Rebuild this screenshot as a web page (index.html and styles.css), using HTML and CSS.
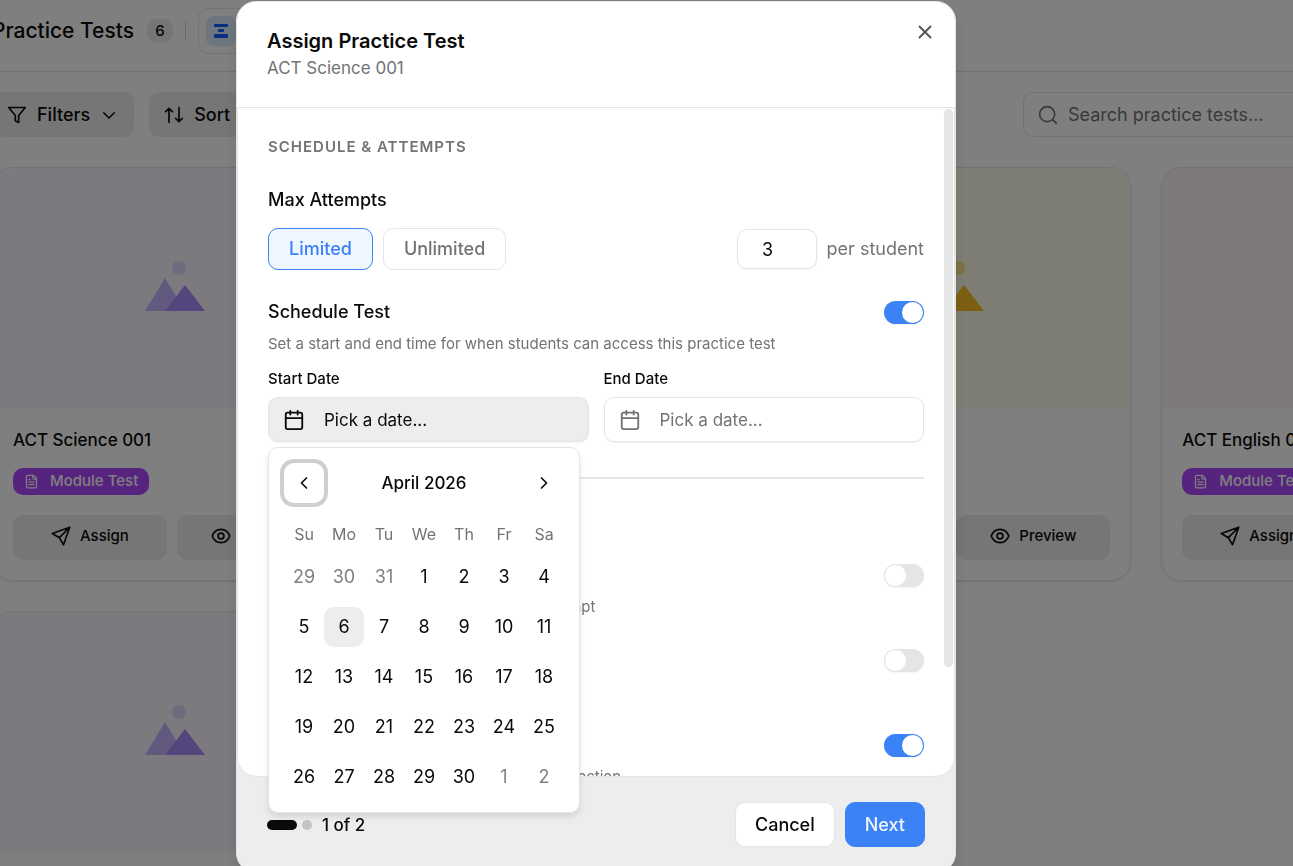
FILE: index.html
```
<!DOCTYPE html>
<html lang="en">
<head>
    <meta charset="UTF-8">
    <meta name="viewport" content="width=device-width, initial-scale=1.0">
    <title>Practice Tests</title>
    <link rel="stylesheet" href="styles.css">
</head>
<body>
    <!-- shared icons -->
    <svg class="sprite" aria-hidden="true">
        <symbol id="i-filter" viewBox="0 0 24 24"><path d="M22 3H2l8 9.500V19l4 2v-8.500z"/></symbol>
        <symbol id="i-down" viewBox="0 0 24 24"><path d="m5 9 7 7 7-7"/></symbol>
        <symbol id="i-sort" viewBox="0 0 24 24"><path d="m2 8 4-4 4 4M6 4v17M22 16l-4 4-4-4M18 20V3"/></symbol>
        <symbol id="i-search" viewBox="0 0 24 24"><circle cx="11" cy="11" r="9"/><path d="m22 22-4.600-4.600"/></symbol>
        <symbol id="i-send" viewBox="0 0 24 24"><path d="M22.500 1.500 1.500 9l8.500 5 5 8.500zM22.500 1.500 10 14"/></symbol>
        <symbol id="i-eye" viewBox="0 0 24 24"><path d="M1.500 12C3.500 6.500 7.500 4 12 4s8.500 2.500 10.500 8c-2 5.500-6 8-10.500 8S3.500 17.500 1.500 12z"/><circle cx="12" cy="12" r="3.500"/></symbol>
        <symbol id="i-file" viewBox="0 0 24 24"><path d="M15 2H6a2 2 0 0 0-2 2v16a2 2 0 0 0 2 2h12a2 2 0 0 0 2-2V7zM14 2v4a2 2 0 0 0 2 2h4M10 9H8M16 13H8M16 17H8"/></symbol>
        <symbol id="i-calendar" viewBox="0 0 24 24"><rect x="3" y="4" width="18" height="18" rx="2"/><path d="M8 2v4M16 2v4M3 10h18"/></symbol>
        <symbol id="i-left" viewBox="0 0 24 24"><path d="m15 18-6-6 6-6"/></symbol>
        <symbol id="i-right" viewBox="0 0 24 24"><path d="m9 18 6-6-6-6"/></symbol>
        <symbol id="i-close" viewBox="0 0 24 24"><path d="M18 6 6 18M6 6l12 12"/></symbol>
        <symbol id="i-hills" viewBox="0 0 80 80"><circle class="sun" cx="47" cy="20" r="7"/><path class="back" d="M13 63 33 30l20 33z"/><path class="front" d="m33 63 20-26 20 26z"/></symbol>
    </svg>

    <div class="page">
        <header class="topbar">
            <h1>Practice Tests</h1>
            <span class="count">6</span>
            <span class="separator"></span>
            <div class="views">
                <button class="view active" aria-label="Grid view">
                    <svg width="14" height="14" viewBox="0 0 14 14"><rect width="14" height="3" rx="1"/><rect x="4" y="5" width="6" height="3" rx="1"/><rect y="10" width="14" height="4" rx="1"/></svg>
                </button>
                <button class="view" aria-label="List view"></button>
            </div>
        </header>

        <div class="toolbar">
            <button class="tool"><svg class="icon"><use href="#i-filter"/></svg>Filters<svg class="icon-chevron"><use href="#i-down"/></svg></button>
            <button class="tool"><svg class="icon"><use href="#i-sort"/></svg>Sort By</button>
            <label class="search">
                <svg class="icon"><use href="#i-search"/></svg>
                <input type="search" placeholder="Search practice tests..." aria-label="Search practice tests">
            </label>
        </div>

        <main class="grid">
            <article class="card">
                <div class="thumb purple"><svg class="hills"><use href="#i-hills"/></svg></div>
                <div class="info">
                    <h2>ACT Science 001</h2>
                    <span class="tag"><svg class="icon-sm"><use href="#i-file"/></svg>Module Test</span>
                    <div class="actions">
                        <button><svg class="icon"><use href="#i-send"/></svg>Assign</button>
                        <button><svg class="icon"><use href="#i-eye"/></svg>Preview</button>
                    </div>
                </div>
            </article>
            <article class="card">
                <div class="thumb purple"><svg class="hills"><use href="#i-hills"/></svg></div>
            </article>
            <article class="card">
                <div class="thumb yellow"><svg class="hills"><use href="#i-hills"/></svg></div>
                <div class="info">
                    <h2>ACT Math</h2>
                    <span class="tag"><svg class="icon-sm"><use href="#i-file"/></svg>Module Test</span>
                    <div class="actions">
                        <button><svg class="icon"><use href="#i-send"/></svg>Assign</button>
                        <button><svg class="icon"><use href="#i-eye"/></svg>Preview</button>
                    </div>
                </div>
            </article>
            <article class="card">
                <div class="thumb pink"><svg class="hills"><use href="#i-hills"/></svg></div>
                <div class="info">
                    <h2>ACT English 001</h2>
                    <span class="tag"><svg class="icon-sm"><use href="#i-file"/></svg>Module Test</span>
                    <div class="actions">
                        <button><svg class="icon"><use href="#i-send"/></svg>Assign</button>
                        <button><svg class="icon"><use href="#i-eye"/></svg>Preview</button>
                    </div>
                </div>
            </article>
            <article class="card">
                <div class="thumb purple"><svg class="hills"><use href="#i-hills"/></svg></div>
                <div class="info"></div>
            </article>
            <article class="card">
                <div class="thumb purple"><svg class="hills"><use href="#i-hills"/></svg></div>
            </article>
        </main>
    </div>

    <div class="overlay">
        <div class="modal" role="dialog" aria-labelledby="modal-title">
            <div class="modal-header">
                <div>
                    <h2 id="modal-title">Assign Practice Test</h2>
                    <p>ACT Science 001</p>
                </div>
                <button class="close" aria-label="Close"><svg class="icon-md"><use href="#i-close"/></svg></button>
            </div>

            <div class="modal-body">
                <h3>Schedule &amp; Attempts</h3>

                <div class="label">Max Attempts</div>
                <div class="attempts">
                    <button class="choice selected">Limited</button>
                    <button class="choice">Unlimited</button>
                    <input type="number" id="attempts" value="3" min="1">
                    <label for="attempts">per student</label>
                </div>

                <div class="setting">
                    <label class="label" for="schedule">Schedule Test</label>
                    <input type="checkbox" class="switch" id="schedule" checked>
                </div>
                <p class="hint">Set a start and end time for when students can access this practice test</p>

                <div class="dates">
                    <div class="field">
                        <label for="start-date">Start Date</label>
                        <button class="date open" id="start-date"><svg class="icon-md"><use href="#i-calendar"/></svg>Pick a date...</button>
                    </div>
                    <div class="field">
                        <label for="end-date">End Date</label>
                        <button class="date" id="end-date"><svg class="icon-md"><use href="#i-calendar"/></svg>Pick a date...</button>
                    </div>
                </div>

                <hr>

                <h3>Options</h3>
                <div class="setting">
                    <label class="label" for="shuffle">Shuffle Answers</label>
                    <input type="checkbox" class="switch" id="shuffle">
                </div>
                <p class="hint">Shuffle the order of answers for every attempt</p>
                <div class="setting">
                    <label class="label" for="answers">Show Answers</label>
                    <input type="checkbox" class="switch" id="answers">
                </div>
                <p class="hint">Show answers after submission</p>
                <div class="setting">
                    <label class="label" for="timer">Section Timer</label>
                    <input type="checkbox" class="switch" id="timer" checked>
                </div>
                <p class="hint">Apply the standard time limit in every ACT section</p>
                <div class="scrollbar"></div>
            </div>

            <div class="modal-footer">
                <span class="step current"></span>
                <span class="step"></span>
                <span class="step-text">1 of 2</span>
                <button class="btn">Cancel</button>
                <button class="btn primary">Next</button>
            </div>

            <div class="calendar">
                <div class="calendar-nav">
                    <button class="focused" aria-label="Previous month"><svg class="icon"><use href="#i-left"/></svg></button>
                    <span>April 2026</span>
                    <button aria-label="Next month"><svg class="icon"><use href="#i-right"/></svg></button>
                </div>
                <table>
                    <thead>
                        <tr><th>Su</th><th>Mo</th><th>Tu</th><th>We</th><th>Th</th><th>Fr</th><th>Sa</th></tr>
                    </thead>
                    <tbody id="days"></tbody>
                </table>
            </div>
        </div>
    </div>

    <script>
        // April 2026 starts on a Wednesday, so the first cell is March 29
        var body = document.getElementById('days');
        for (var week = 0; week < 5; week++) {
            var row = body.insertRow();
            for (var day = 0; day < 7; day++) {
                var date = new Date(2026, 2, 29 + week * 7 + day);
                var button = document.createElement('button');
                button.innerText = date.getDate();
                if (date.getMonth() !== 3) {
                    button.className = 'outside';
                } else if (date.getDate() === 6) {
                    button.className = 'today';
                }
                row.insertCell().appendChild(button);
            }
        }
    </script>
</body>
</html>
```
FILE: styles.css
```
* {
    box-sizing: border-box;
}
body {
    margin: 0;
    height: 100vh;
    overflow: hidden;
    font-family: Inter, "Liberation Sans", sans-serif;
    font-size: 18px;
    line-height: 24px;
    color: #0a0a0a;
    background: white;
}
h1, h2, h3, p {
    margin: 0;
}
button, input {
    font: inherit;
    color: inherit;
}
button {
    padding: 0;
    border: none;
    background: none;
    cursor: pointer;
}
svg {
    flex: none;
}
.sprite {
    display: none;
}
.icon, .icon-sm, .icon-md, .icon-chevron {
    fill: none;
    stroke: currentColor;
    stroke-width: 2;
    stroke-linecap: round;
    stroke-linejoin: round;
}
.icon {
    width: 20px;
    height: 20px;
}
.icon-chevron {
    width: 18px;
    height: 18px;
}
.icon-sm {
    width: 15px;
    height: 15px;
}
.icon-md {
    width: 22px;
    height: 22px;
}

/* page behind the dialog */
.page {
    margin: 0 -228px 0 -8px;
}
.topbar {
    display: flex;
    align-items: center;
    height: 72px;
    padding-bottom: 9px;
    border-bottom: 1px solid #e5e5e5;
}
.topbar h1 {
    font-size: 21px;
    font-weight: 500;
}
.count {
    width: 26px;
    margin-left: 13px;
    border-radius: 10px;
    background: #ededed;
    font-size: 15px;
    font-weight: 500;
    text-align: center;
}
.separator {
    width: 1px;
    height: 20px;
    margin: 0 12px;
    background: #d4d4d4;
}
.views {
    display: flex;
    gap: 8px;
    padding: 7px;
    border: 1px solid #e5e5e5;
    border-radius: 10px;
}
.view {
    display: flex;
    align-items: center;
    justify-content: center;
    width: 30px;
    height: 30px;
    border-radius: 8px;
}
.view.active {
    background: #dbeafe;
    fill: #155dfc;
}
.toolbar {
    display: flex;
    gap: 15px;
    padding: 20px 0 30px;
}
.tool {
    display: flex;
    align-items: center;
    gap: 10px;
    height: 45px;
    padding: 0 16px 0 15px;
    border-radius: 10px;
    background: #ededed;
    font-weight: 500;
}
.search {
    display: flex;
    align-items: center;
    gap: 8px;
    width: 498px;
    height: 45px;
    margin-left: auto;
    padding: 0 14px;
    border: 1px solid #e5e5e5;
    border-radius: 10px;
    color: #737373;
}
.search input {
    flex: 1;
    border: none;
    outline: none;
    background: none;
}
.search input::placeholder {
    color: #737373;
}
.grid {
    display: grid;
    grid-template-columns: repeat(4, 1fr);
    gap: 30px;
}
.card {
    overflow: hidden;
    border: 1px solid #e5e5e5;
    border-radius: 20px;
    box-shadow: 0 1px 2px rgba(0, 0, 0, 0.1);
}
.thumb {
    display: flex;
    align-items: center;
    justify-content: center;
    height: 240px;
}
.hills {
    width: 80px;
    height: 80px;
}
.purple {
    background: #faf5ff;
    --sun: #ddd6fe;
    --back: #c4b5fd;
    --front: #a78bfa;
}
.yellow {
    background: #fefce8;
    --sun: #fde68a;
    --back: #fcd34d;
    --front: #fbbf24;
}
.pink {
    background: #fdf2f8;
    --sun: #fbcfe8;
    --back: #f9a8d4;
    --front: #f472b6;
}
.sun {
    fill: var(--sun);
}
.back {
    fill: var(--back);
}
.front {
    fill: var(--front);
}
.info {
    padding: 20px;
}
.info h2 {
    margin-bottom: 16px;
    font-size: 17px;
    font-weight: 500;
}
.tag {
    display: flex;
    align-items: center;
    gap: 11px;
    width: fit-content;
    height: 27px;
    margin-bottom: 20px;
    padding: 0 11px 1px;
    border-radius: 10px;
    background: #ad46ff;
    color: white;
    font-size: 15px;
    font-weight: 500;
}
.actions {
    display: grid;
    grid-template-columns: 1fr 1fr;
    gap: 10px;
}
.actions button {
    display: flex;
    align-items: center;
    justify-content: center;
    gap: 9px;
    height: 45px;
    padding-bottom: 3px;
    border-radius: 10px;
    background: #ededed;
    font-size: 15px;
    font-weight: 500;
}

/* dialog */
.overlay {
    position: fixed;
    inset: 0;
    display: flex;
    justify-content: center;
    padding: 1px 101px 0 0;
    background: rgba(0, 0, 0, 0.5);
}
.modal {
    position: relative;
    display: flex;
    flex-direction: column;
    width: 100%;
    max-width: 720px;
    height: calc(100vh + 6px);
    border: 1px solid #e5e5e5;
    border-radius: 20px;
    background: #ededed;
    box-shadow: 0 10px 15px rgba(0, 0, 0, 0.1);
}
.modal-header {
    display: flex;
    justify-content: space-between;
    align-items: flex-start;
    padding: 25px 19px;
    border-bottom: 1px solid #e5e5e5;
    border-radius: 20px 20px 0 0;
    background: white;
}
.modal-header div {
    padding-left: 11px;
}
.modal-header h2 {
    font-size: 20px;
    font-weight: 600;
    line-height: 28px;
}
.modal-header p {
    font-size: 17px;
    line-height: 27px;
    color: #737373;
}
.close {
    display: flex;
    margin-top: -6px;
    color: #525252;
}
.modal-body {
    position: relative;
    flex: 1;
    overflow: hidden;
    padding: 27px 30px 0;
    border: 1px solid #e5e5e5;
    border-top: none;
    border-radius: 0 0 20px 20px;
    background: white;
}
.modal-body h3 {
    margin-bottom: 29px;
    color: #737373;
    font-size: 15px;
    font-weight: 600;
    letter-spacing: 1px;
    text-transform: uppercase;
}
.label {
    font-weight: 500;
}
.attempts {
    display: flex;
    align-items: center;
    gap: 10px;
    margin: 16px 0 30px;
    color: #737373;
}
.choice {
    height: 42px;
    padding: 0 20px;
    border: 1px solid #e5e5e5;
    border-radius: 10px;
    font-weight: 500;
}
.choice.selected {
    border-color: #3b82f6;
    background: #eff6ff;
    color: #3b82f6;
}
.attempts input {
    width: 80px;
    height: 40px;
    margin-left: auto;
    padding: 0 28px 0 10px;
    border: 1px solid #e5e5e5;
    border-radius: 10px;
    box-shadow: 0 1px 2px rgba(0, 0, 0, 0.05);
    color: #0a0a0a;
    text-align: center;
    appearance: textfield;
}
.attempts input::-webkit-inner-spin-button {
    display: none;
}
.setting {
    display: flex;
    align-items: center;
    justify-content: space-between;
    height: 24px;
}
.switch {
    appearance: none;
    width: 40px;
    height: 23px;
    margin: 0;
    padding: 1px;
    border-radius: 12px;
    background: #e5e5e5;
    box-shadow: 0 1px 2px rgba(0, 0, 0, 0.05);
}
.switch::before {
    content: "";
    display: block;
    width: 21px;
    height: 21px;
    border-radius: 50%;
    background: white;
}
.switch:checked {
    background: #3b82f6;
}
.switch:checked::before {
    margin-left: auto;
}
.hint {
    margin: 8px 0 29px;
    color: #737373;
    font-size: 15px;
}
.dates {
    display: grid;
    grid-template-columns: 1fr 1fr;
    gap: 15px;
    margin-top: -18px;
}
.field label {
    display: block;
    margin-bottom: 6px;
    font-size: 15px;
    font-weight: 500;
}
.date {
    display: flex;
    align-items: center;
    gap: 19px;
    width: 100%;
    height: 45px;
    padding: 0 14px;
    border: 1px solid #e5e5e5;
    border-radius: 10px;
    box-shadow: 0 1px 2px rgba(0, 0, 0, 0.05);
    color: #737373;
    font-size: 17px;
}
.date.open {
    background: #ededed;
    color: #0a0a0a;
}
hr {
    height: 2px;
    margin: 35px 0 31px;
    border: none;
    background: #e5e5e5;
}
.scrollbar {
    position: absolute;
    top: 1px;
    right: 1px;
    width: 9px;
    height: 558px;
    border-radius: 5px;
    background: #e5e5e5;
}
.modal-footer {
    display: flex;
    align-items: center;
    padding: 25px 30px;
}
.step {
    width: 10px;
    height: 10px;
    margin-right: 10px;
    border-radius: 5px;
    background: #c4c4c4;
}
.step.current {
    width: 30px;
    margin-right: 5px;
    background: #0a0a0a;
}
.step-text {
    margin-right: auto;
    font-size: 17px;
    font-weight: 500;
}
.btn {
    height: 45px;
    margin-left: 10px;
    padding: 0 19px;
    border: 1px solid #e5e5e5;
    border-radius: 10px;
    background: white;
    font-weight: 500;
}
.btn.primary {
    border-color: #3b82f6;
    background: #3b82f6;
    color: #eff6ff;
}

/* date popover */
.calendar {
    position: absolute;
    top: 445px;
    left: 31px;
    padding: 15px;
    border: 1px solid #e5e5e5;
    border-radius: 10px;
    background: white;
    box-shadow: 0 4px 6px rgba(0, 0, 0, 0.1);
}
.calendar-nav {
    display: flex;
    align-items: center;
    justify-content: space-between;
    font-size: 17px;
    font-weight: 500;
}
.calendar-nav button {
    display: flex;
    align-items: center;
    justify-content: center;
    width: 40px;
    height: 40px;
    border-radius: 10px;
}
.calendar-nav .focused {
    box-shadow: 0 0 0 4px #cfcfcf;
}
table {
    margin-top: 15px;
    border-collapse: collapse;
}
tr {
    display: flex;
}
th {
    width: 40px;
    padding: 4px 0 1px;
    color: #737373;
    font-size: 16px;
    font-weight: 400;
}
td {
    padding: 10px 0 0;
}
td button {
    display: block;
    width: 40px;
    height: 40px;
    border-radius: 10px;
}
.today {
    background: #ededed;
}
.outside {
    color: #737373;
    opacity: 0.9;
}
```
